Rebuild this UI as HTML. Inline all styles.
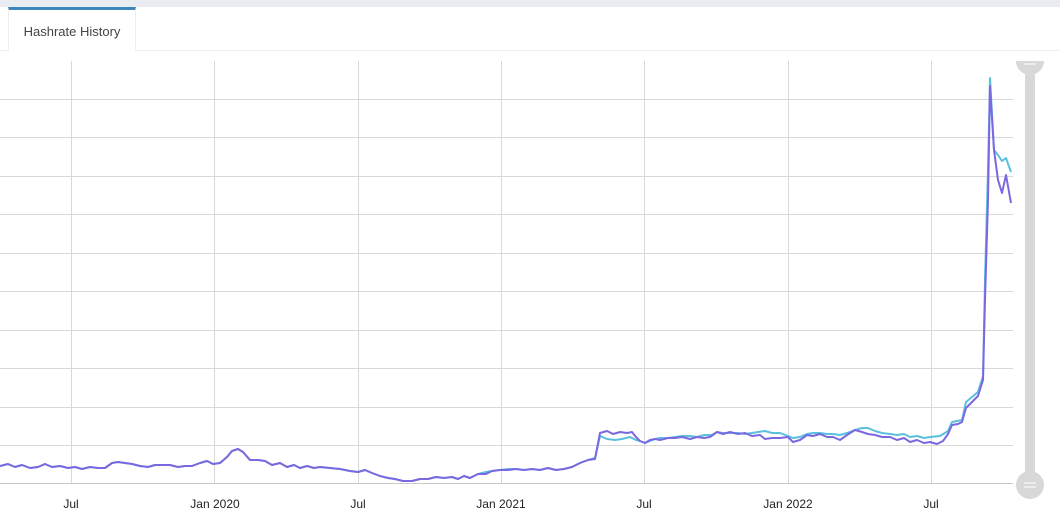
<!DOCTYPE html>
<html><head><meta charset="utf-8"><style>
html,body{margin:0;padding:0;width:1060px;height:518px;background:#fff;overflow:hidden;font-family:"Liberation Sans",sans-serif}
.top{position:absolute;left:0;top:0;width:1060px;height:7px;background:#e9edf2}
.tab{position:absolute;left:8px;top:7px;width:128px;height:44px;border-top:3px solid #3d87bd;border-left:1px solid #eee;border-right:1px solid #eee;background:#fff;box-sizing:border-box;font-size:13px;color:#444;text-align:center;line-height:44px}
.line{position:absolute;left:0;top:50px;width:1060px;height:1px;background:#eee}
svg{position:absolute;left:0;top:0}
</style></head><body>
<div class="top"></div>
<div class="line"></div>
<div class="tab">Hashrate History</div>
<svg width="1060" height="518">
<g stroke="#d8d8d8" stroke-width="1">
<line x1="0" x2="1013" y1="99.5" y2="99.5"/><line x1="0" x2="1013" y1="137.5" y2="137.5"/><line x1="0" x2="1013" y1="176.5" y2="176.5"/><line x1="0" x2="1013" y1="214.5" y2="214.5"/><line x1="0" x2="1013" y1="253.5" y2="253.5"/><line x1="0" x2="1013" y1="291.5" y2="291.5"/><line x1="0" x2="1013" y1="330.5" y2="330.5"/><line x1="0" x2="1013" y1="368.5" y2="368.5"/><line x1="0" x2="1013" y1="407.5" y2="407.5"/><line x1="0" x2="1013" y1="445.5" y2="445.5"/>
<line x1="71.5" x2="71.5" y1="61" y2="483"/><line x1="214.5" x2="214.5" y1="61" y2="483"/><line x1="358.5" x2="358.5" y1="61" y2="483"/><line x1="501.5" x2="501.5" y1="61" y2="483"/><line x1="644.5" x2="644.5" y1="61" y2="483"/><line x1="788.5" x2="788.5" y1="61" y2="483"/><line x1="931.5" x2="931.5" y1="61" y2="483"/>
</g>
<line x1="0" x2="1013" y1="483.5" y2="483.5" stroke="#c8c8c8"/>
<polyline fill="none" stroke="#5bc0de" stroke-width="2" stroke-linejoin="round" points="0,466 8,464 15,467 22,465 30,468 38,467 45,464 52,467 60,466 68,468 75,467 82,469 90,467 98,468 105,468 112,463 118,462 125,463 132,464 140,466 148,467 155,465 162,465 170,465 178,467 185,466 192,466 200,463 207,461 213,464 220,463 227,457 232,451 238,449 243,452 250,460 258,460 265,461 272,465 280,463 287,467 294,465 300,468 307,466 314,468 320,467 330,468 340,469 350,471 358,472 365,470 372,473 380,476 388,478 395,479 403,481 412,481 420,479 428,479 436,477 444,478 452,477 458,479 464,476 470,478 478,474 486,472 492,471 500,470 508,469 516,469 524,470 532,469 540,470 548,468 556,470 564,469 572,467 580,463 588,460 595,458 600,436 607,439 615,440 622,439 630,437 636,440 640,441 645,443 650,441 655,439 660,438 668,438 675,437 682,436 690,436 697,437 704,435 712,435 717,432 723,433 730,433 738,433 745,434 752,433 758,432 765,431 772,433 780,433 788,436 793,438 800,437 807,434 813,433 820,433 827,434 833,434 840,435 847,433 855,430 862,428 868,428 875,431 882,433 890,434 897,435 904,434 910,437 917,436 924,438 930,437 940,436 948,431 952,422 962,420 966,402 972,397 978,392 983,376 985,280 988,170 990,78 994,150 998,155 1002,161 1006,158 1011,172"/>
<polyline fill="none" stroke="#7b68e0" stroke-width="2" stroke-linejoin="round" points="0,466 8,464 15,467 22,465 30,468 38,467 45,464 52,467 60,466 68,468 75,467 82,469 90,467 98,468 105,468 112,463 118,462 125,463 132,464 140,466 148,467 155,465 162,465 170,465 178,467 185,466 192,466 200,463 207,461 213,464 220,463 227,457 232,451 238,449 243,452 250,460 258,460 265,461 272,465 280,463 287,467 294,465 300,468 307,466 314,468 320,467 330,468 340,469 350,471 358,472 365,470 372,473 380,476 388,478 395,479 403,481 412,481 420,479 428,479 436,477 444,478 452,477 458,479 464,476 470,478 478,474 486,474 492,471 500,470 508,470 516,469 524,470 532,469 540,470 548,468 556,470 564,469 572,467 580,463 588,460 595,459 600,433 607,431 613,434 620,432 627,433 632,432 636,437 640,441 645,443 650,440 655,439 660,440 668,438 675,438 682,437 690,439 697,437 704,438 710,437 717,432 723,434 730,432 738,434 745,433 752,436 760,435 765,439 772,438 780,438 788,437 793,442 800,440 807,435 813,436 820,434 827,437 833,437 840,440 847,435 855,430 862,432 868,434 875,435 882,437 890,437 897,440 904,438 910,442 917,440 924,443 930,442 937,444 943,441 948,434 952,425 958,424 962,422 966,408 972,402 978,396 983,380 985,300 988,200 990,86 994,150 998,180 1002,193 1006,175 1011,203"/>
<rect x="1025" y="66" width="10" height="420" fill="#d8d8d8"/>
<path d="M1016,61 A14,14 0 0 0 1044,61 Z" fill="#d8d8d8"/>
<line x1="1024" x2="1036" y1="64" y2="64" stroke="#fff" stroke-width="1"/>
<circle cx="1030" cy="485" r="14" fill="#d8d8d8"/>
<line x1="1024" x2="1036" y1="483" y2="483" stroke="#fff"/><line x1="1024" x2="1036" y1="487" y2="487" stroke="#fff"/>
<g font-family="Liberation Sans, sans-serif" font-size="12" fill="#222" text-anchor="middle">
<text x="71" y="508">Jul</text><text x="215" y="508">Jan 2020</text><text x="358" y="508">Jul</text><text x="501" y="508">Jan 2021</text><text x="644" y="508">Jul</text><text x="788" y="508">Jan 2022</text><text x="931" y="508">Jul</text>
</g>
</svg>
</body></html>
